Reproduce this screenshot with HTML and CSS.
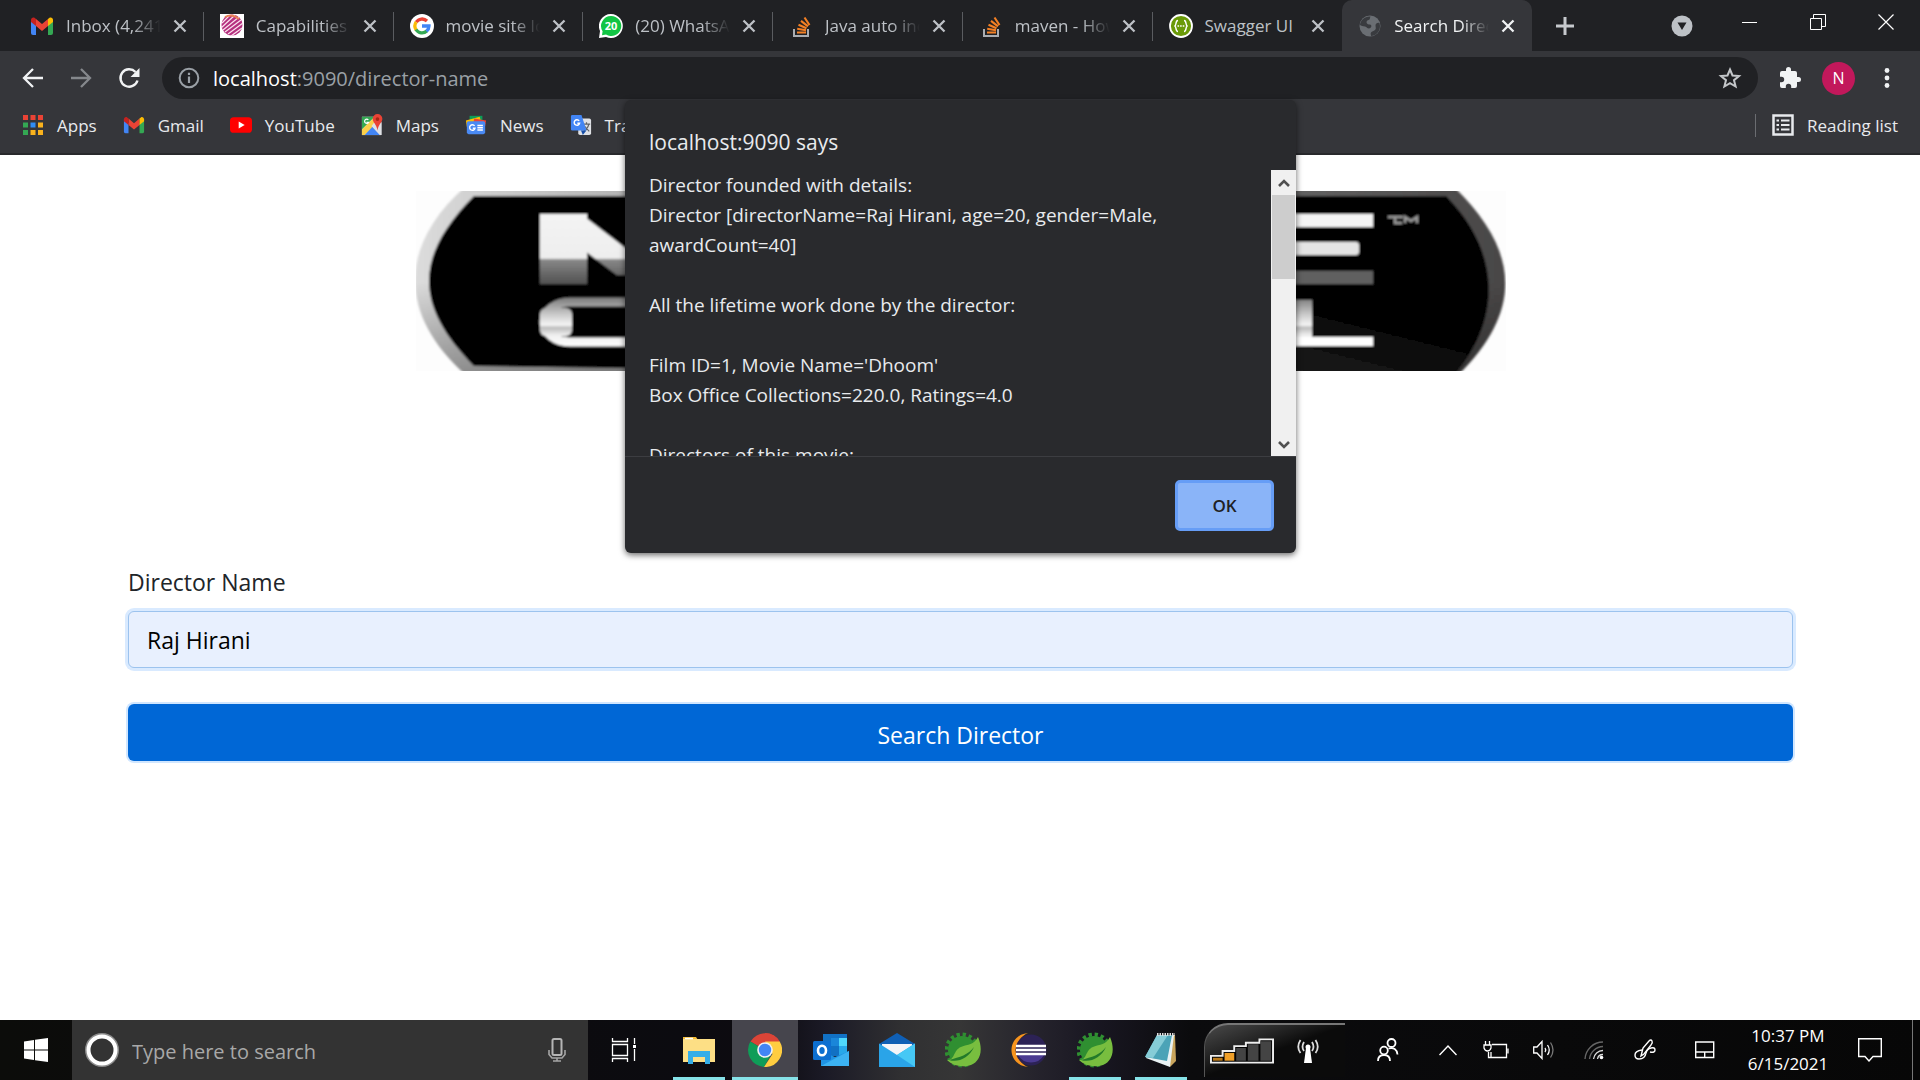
FILE: index.html
```html
<!DOCTYPE html>
<html lang="en">
<head>
<meta charset="utf-8">
<title>Search Director</title>
<link rel="stylesheet" href="styles.css">
</head>
<body>
<svg class="defs" aria-hidden="true">
  <defs>
    <symbol id="x" viewBox="0 0 14 14"><path d="M1.500 1.500l11 11M12.500 1.500l-11 11" fill="none" stroke="currentColor" stroke-width="2.300"/></symbol>
    <symbol id="gmail" viewBox="0 0 24 24"><path d="M1 6v13a2 2 0 0 0 2 2h3V10z" fill="#4285f4"/><path d="M23 6v13a2 2 0 0 1-2 2h-3V10z" fill="#34a853"/><path d="M6 5v7l6 5 6-5V5l-6 5z" fill="#ea4335"/><path d="M1 6v2l5 4V5L4.500 3.800C3 2.700 1 4 1 6z" fill="#c5221f"/><path d="M23 6v2l-5 4V5l1.500-1.200C21 2.700 23 4 23 6z" fill="#fbbc04"/></symbol>
    <symbol id="stack" viewBox="0 0 24 24"><path d="M5 15v7h14v-7" fill="none" stroke="#a9adb2" stroke-width="2"/><path d="M8 18.500h9M8.200 14.800l8.800 1.400M9.500 10.800l8 3.500M12 6.800l7 5.500M15.500 3.500l5 7.500" stroke="#f48024" stroke-width="2.100"/></symbol>
    <symbol id="spring" viewBox="0 0 36 36"><circle cx="17" cy="18" r="14" fill="#2f8f31"/><circle cx="17" cy="18" r="15.500" fill="none" stroke="#2f8f31" stroke-width="4" stroke-dasharray="3.300 2.800"/><path d="M33 5c6 14 2 27-11 29-8 1-15-1-20-6 8 1 6-10 14-13 7-3 13-2 17-10z" fill="#78be3f"/><path d="M4 28c9 3 20-2 25-13-6 8-14 10-25 13z" fill="#237a2a"/></symbol>
  </defs>
</svg>

<div class="screen">
  <header class="browser">
    <div class="tabbar">
      <div class="tabs">
        <div class="tab"><svg class="fav"><use href="#gmail"/></svg><span class="tab-title">Inbox (4,241)</span><button class="close" aria-label="Close tab"><svg><use href="#x"/></svg></button></div>
        <div class="tab"><svg class="fav" viewBox="0 0 24 24"><path d="M0 0h24v24H0z" fill="#fff"/><circle cx="12" cy="11" r="10.500" fill="#b5307f"/><path d="M2 9l9-9M1 14L15 1M3 16L19 3M5 18L21 6M8 20L23 9M11 22l11-8" stroke="#fbe3ee" stroke-width="1.200"/><path d="M5 3q7-4 14 2" stroke="#e98253" fill="none" stroke-width="2"/></svg><span class="tab-title">Capabilities -</span><button class="close" aria-label="Close tab"><svg><use href="#x"/></svg></button></div>
        <div class="tab"><svg class="fav" viewBox="0 0 24 24"><circle cx="12" cy="12" r="12" fill="#fff"/><g fill="none" stroke-width="3.300"><path d="M6.200 8.200A7 7 0 0 1 17 7" stroke="#ea4335"/><path d="M6.200 8A7 7 0 0 0 6.200 16" stroke="#fbbc05"/><path d="M6 15.500A7 7 0 0 0 16.800 17" stroke="#34a853"/><path d="M12 12h7A7 7 0 0 1 16.500 17.300" stroke="#4285f4"/></g></svg><span class="tab-title">movie site logo</span><button class="close" aria-label="Close tab"><svg><use href="#x"/></svg></button></div>
        <div class="tab"><svg class="fav" viewBox="0 0 24 24"><path d="M12 0a12 12 0 1 1-5 23L0 24l1-7A12 12 0 0 1 12 0z" fill="#fff"/><path d="M12 2a10 10 0 1 1-5 18.500l-4 .8.600-4A10 10 0 0 1 12 2z" fill="#12c544"/><text x="12" y="16" text-anchor="middle" class="badge-num">20</text></svg><span class="tab-title">(20) WhatsApp</span><button class="close" aria-label="Close tab"><svg><use href="#x"/></svg></button></div>
        <div class="tab"><svg class="fav"><use href="#stack"/></svg><span class="tab-title">Java auto incr</span><button class="close" aria-label="Close tab"><svg><use href="#x"/></svg></button></div>
        <div class="tab"><svg class="fav"><use href="#stack"/></svg><span class="tab-title">maven - How</span><button class="close" aria-label="Close tab"><svg><use href="#x"/></svg></button></div>
        <div class="tab"><svg class="fav" viewBox="0 0 24 24"><circle cx="12" cy="12" r="11" fill="#6a9a08" stroke="#fff" stroke-width="1.800"/><path d="M9 6.500c-3 0-1 5-3.500 5.500C8 12.500 6 17.500 9 17.500M15 6.500c3 0 1 5 3.500 5.500-2.500.500-.5 5.500-3.500 5.500" fill="none" stroke="#fff" stroke-width="1.500"/><path d="M8.500 12h7" stroke="#fff" stroke-width="1.600" stroke-dasharray="1.600 1"/></svg><span class="tab-title">Swagger UI</span><button class="close" aria-label="Close tab"><svg><use href="#x"/></svg></button></div>
        <div class="tab active"><svg class="fav" viewBox="0 0 24 24"><circle cx="12" cy="12" r="10.500" fill="#6a6e73"/><path d="M12.500 2.500c-1 2 0 3-2 3.500S8 8 9 9.500s3 .5 4 1.500 0 3-2 3.500c-2 0-2-1.500-4-2S3 12 2 11C2.500 6 7 2 12.500 2.500zM21.500 9c-2-.5-4 .5-4 2.500s1 3-.5 4.500-3 1-4 2.500.500 3 0 3.500c5 0 9-4.500 9-10z" fill="#393b3f"/></svg><span class="tab-title">Search Director</span><button class="close" aria-label="Close tab"><svg><use href="#x"/></svg></button></div>
      </div>
      <button class="new-tab" aria-label="New tab"><svg width="18" height="18" viewBox="0 0 18 18"><path d="M9 0v18M0 9h18" stroke="#c6c9cd" stroke-width="3"/></svg></button>
      <div class="window-controls">
        <button aria-label="Search tabs"><svg width="22" height="22" viewBox="0 0 22 22"><circle cx="11" cy="11" r="10.500" fill="#bdc1c6"/><path d="M6.500 7.500h9L11 15z" fill="#202124"/></svg></button>
        <button aria-label="Minimize"><svg width="16" height="16" viewBox="0 0 16 16"><path d="M0 8.500h15" stroke="#fff"/></svg></button>
        <button aria-label="Restore"><svg width="16" height="16" viewBox="0 0 16 16"><path d="M.500 4.500h11v11H.500zM3.500 4V.500h12v12H12" fill="none" stroke="#fff"/></svg></button>
        <button aria-label="Close"><svg width="16" height="16" viewBox="0 0 16 16"><path d="M.500.500l15 15M15.500.500l-15 15" stroke="#fff" stroke-width="1.200"/></svg></button>
      </div>
    </div>

    <div class="toolbar">
      <button aria-label="Back"><svg width="24" height="24" viewBox="0 0 24 24"><path d="M22 12H3M12 3l-9 9 9 9" fill="none" stroke="#f1f3f4" stroke-width="2.300"/></svg></button>
      <button aria-label="Forward"><svg width="24" height="24" viewBox="0 0 24 24"><path d="M2 12h19M12 3l9 9-9 9" fill="none" stroke="#85888c" stroke-width="2.300"/></svg></button>
      <button aria-label="Reload"><svg width="24" height="24" viewBox="0 0 24 24"><path d="M20.500 14.500A8.700 8.700 0 1 1 18.500 6" fill="none" stroke="#f1f3f4" stroke-width="2.400"/><path d="M22.500 2v9h-9z" fill="#f1f3f4"/></svg></button>
      <div class="omnibox">
        <svg width="22" height="22" viewBox="0 0 22 22"><circle cx="11" cy="11" r="9.300" fill="none" stroke="#9aa0a6" stroke-width="2"/><path d="M11 9.500V16M11 5.800v2.200" stroke="#9aa0a6" stroke-width="2.200"/></svg>
        <div class="url"><span class="host">localhost</span>:9090/director-name</div>
        <button aria-label="Bookmark this page"><svg width="24" height="24" viewBox="0 0 24 24"><path d="M12 3.500l2.500 6 6.500.500-5 4.200 1.600 6.300L12 17.100l-5.600 3.400L8 14.200 3 10l6.500-.500z" fill="none" stroke="#c4c7ca" stroke-width="2"/></svg></button>
      </div>
      <button aria-label="Extensions"><svg width="24" height="24" viewBox="0 0 24 24"><path d="M20.500 11H19V7a2 2 0 0 0-2-2h-4V3.500a2.500 2.500 0 0 0-5 0V5H4a2 2 0 0 0-2 2v3.800h1.500a2.700 2.700 0 0 1 0 5.400H2V20a2 2 0 0 0 2 2h3.800v-1.500a2.700 2.700 0 0 1 5.400 0V22H17a2 2 0 0 0 2-2v-4h1.500a2.500 2.500 0 0 0 0-5z" fill="#f1f3f4"/></svg></button>
      <button class="avatar">N</button>
      <button aria-label="Menu"><svg width="24" height="24" viewBox="0 0 24 24"><g fill="#f1f3f4"><circle cx="12" cy="4.500" r="2.400"/><circle cx="12" cy="12" r="2.400"/><circle cx="12" cy="19.500" r="2.400"/></g></svg></button>
    </div>

    <nav class="bookmarks">
      <a href="#"><svg viewBox="0 0 22 22"><path d="M1 1h5v5H1zM8.500 1h5v5h-5zM16 1h5v5h-5z" fill="#ea4335"/><path d="M1 8.500h5v5H1zM1 16h5v5H1z" fill="#34a853"/><path d="M8.500 8.500h5v5h-5z" fill="#2f8df5"/><path d="M16 8.500h5v5h-5zM8.500 16h5v5h-5zM16 16h5v5h-5z" fill="#f9b21d"/></svg>Apps</a>
      <a href="#"><svg><use href="#gmail"/></svg>Gmail</a>
      <a href="#"><svg viewBox="0 0 24 24"><rect y="3.500" width="24" height="17" rx="4" fill="#f00"/><path d="M9.500 8.200v7.600l6.500-3.800z" fill="#fff"/></svg>YouTube</a>
      <a href="#"><svg viewBox="0 0 24 24"><path d="M1 3h21v20H1z" fill="#e8eaed"/><path d="M1 3h14L1 17z" fill="#34a853"/><path d="M1 17L15 3l3 6L4 23H1z" fill="#fbd04a"/><path d="M4 23l8.500-9 8.500 9z" fill="#4285f4"/><path d="M11.500 13l9 10h2V9l-7-1z" fill="#dfe1e5"/><path d="M18 0a5.300 5.300 0 0 1 5.300 5.300C23.300 9.500 19 11 18 18c-1-7-5.300-8.500-5.300-12.700A5.300 5.300 0 0 1 18 0z" fill="#ea4335"/><circle cx="18" cy="5.500" r="2" fill="#a52714"/><path d="M8 6.500A2.300 2.300 0 1 0 8.300 9H6" stroke="#fff" stroke-width="1.300" fill="none"/></svg>Maps</a>
      <a href="#"><svg viewBox="0 0 24 24"><path d="M5 2h14v9H5z" fill="#0c9d58"/><path d="M1 7l15-4 2 7-16 4z" fill="#fbbc04"/><path d="M10 5l13 2-1 6-13-2z" fill="#ea4335"/><rect x="2" y="8" width="20" height="14" rx="2" fill="#4a8af4"/><path d="M10.500 13A3 3 0 1 0 11 15.500H8.500M13.500 12.500h6M13.500 15h6M13.500 17.500h6" fill="none" stroke="#fff" stroke-width="1.500"/></svg>News</a>
      <a href="#"><svg viewBox="0 0 24 24"><rect x="9" y="5" width="14" height="18" rx="2" fill="#dfe1e5"/><path d="M14 11h8M18 9v2M20.500 11q-1 5-5.500 7M15.500 13l5.500 6" stroke="#5f6368" stroke-width="1.300" fill="none"/><path d="M2.500 1h10L18 18H2.500A1.500 1.500 0 0 1 1 16.500v-14A1.500 1.500 0 0 1 2.500 1z" fill="#4285f4"/><path d="M12 18h6l-4 5z" fill="#174ea6"/><path d="M10 7.500A3 3 0 1 0 10.500 10H8" stroke="#fff" stroke-width="1.600" fill="none"/></svg>Translate</a>
      <button class="reading"><svg viewBox="0 0 22 22"><path d="M1.500 1.500h19v19h-19z" fill="none" stroke="#e8eaed" stroke-width="2.500"/><path d="M4.500 6.500H7M4.500 11H7M4.500 15.500H7M9 6.500h8.500M9 11h8.500M9 15.500h8.500" stroke="#e8eaed" stroke-width="2.200"/></svg>Reading list</button>
    </nav>
  </header>

  <main class="page">
    <svg class="logo" viewBox="0 0 1090 180" preserveAspectRatio="none" aria-hidden="true">
      <defs>
        <linearGradient id="rim"><stop offset="0" stop-color="#dcdcdc"/><stop offset=".25" stop-color="#a8a8a8"/><stop offset=".75" stop-color="#6a6a6a"/><stop offset="1" stop-color="#484646"/></linearGradient>
        <linearGradient id="rimfade" x1="0" x2="0" y1="0" y2="1"><stop offset=".5" stop-opacity="0"/><stop offset="1" stop-opacity=".35"/></linearGradient>
        <linearGradient id="face" gradientUnits="userSpaceOnUse" x1="800" x2="770" y1="80" y2="200"><stop offset="0" stop-color="#000"/><stop offset="1" stop-color="#2a2a2a"/></linearGradient>
        <linearGradient id="chrome" gradientUnits="userSpaceOnUse" x1="0" x2="0" y1="20" y2="95"><stop offset="0" stop-color="#f4f4f4"/><stop offset=".63" stop-color="#eee"/><stop offset=".65" stop-color="#888"/><stop offset="1" stop-color="#4c4c4c"/></linearGradient>
        <linearGradient id="chrome2" gradientUnits="userSpaceOnUse" x1="0" x2="0" y1="106" y2="157"><stop offset="0" stop-color="#777"/><stop offset=".35" stop-color="#ccc"/><stop offset=".55" stop-color="#f5f5f5"/><stop offset=".6" stop-color="#bbb"/><stop offset=".75" stop-color="#f0f0f0"/><stop offset="1" stop-color="#fff"/></linearGradient>
        <filter id="soft"><feGaussianBlur stdDeviation="1.200"/></filter>
        <clipPath id="upper"><rect x="120" y="23" width="180" height="61"/></clipPath>
      </defs>
      <rect width="1090" height="180" fill="#fdfdfd"/>
      <g filter="url(#soft)">
        <path d="M49 -4C-18 55-18 125 52 186H1040C1106 122 1106 62 1038 -4z" fill="url(#rim)"/>
        <path d="M49 -4C-18 55-18 125 52 186H1040C1106 122 1106 62 1038 -4z" fill="url(#rimfade)"/>
        <path d="M58 5C-2 65-2 115 58 175L900 186H1036C1086 130 1086 62 1030 5z" fill="#000"/>
        <path d="M520 5H1030C1086 62 1084 130 1034 186H520z" fill="url(#face)"/>
        <rect x="124" y="23" width="47" height="70" fill="url(#chrome)"/>
        <g clip-path="url(#upper)"><path d="M165 23L250 88H206L169 60V23z" fill="url(#chrome)"/></g>
        <rect x="128" y="111" width="160" height="40" rx="26" fill="none" stroke="url(#chrome2)" stroke-width="9"/>
        <rect x="124" y="117" width="32" height="28" rx="6" fill="url(#chrome2)"/>
        <rect x="800" y="23" width="157" height="13" fill="#f4f4f4"/>
        <rect x="800" y="51" width="143" height="13" rx="3" fill="#e4e4e4"/>
        <rect x="800" y="80" width="157" height="13" fill="#606060"/>
        <rect x="850" y="109" width="46" height="42" fill="url(#chrome2)"/>
        <rect x="850" y="146" width="107" height="9" fill="#fff"/>
        <path d="M972 26h15M979 27v5h7M989 32v-6l6 4 6-4v6" fill="none" stroke="#999" stroke-width="2.500"/>
      </g>
    </svg>
    <form class="search-form" onsubmit="return false">
      <label for="director">Director Name</label>
      <input id="director" type="text" value="Raj Hirani">
      <button type="submit">Search Director</button>
    </form>
  </main>

  <footer class="taskbar">
    <button class="start" aria-label="Start"><svg width="24" height="24" viewBox="0 0 24 24"><path d="M0 3.400L10 2v9.500H0zM11 1.800L24 0v11.500H11zM0 12.500h10V22L0 20.600zM11 12.500h13V24l-13-1.800z" fill="#fff"/></svg></button>
    <div class="search">
      <svg width="36" height="36" viewBox="0 0 36 36"><circle cx="18" cy="18" r="15.500" fill="none" stroke="#8d8d8d" stroke-width="3"/><circle cx="18" cy="18" r="13.500" fill="none" stroke="#fff" stroke-width="4"/></svg>
      <input type="text" placeholder="Type here to search" aria-label="Type here to search">
      <svg width="18" height="24" viewBox="0 0 18 24"><rect x="4.500" y="1" width="9" height="16" rx="1.500" fill="none" stroke="#b5b5b5" stroke-width="2"/><path d="M1 12v4.500L4 20h10l3-3.500V12M9 20v3M5 23h8" fill="none" stroke="#a5a5a5" stroke-width="1.600"/></svg>
    </div>
    <button class="app wide" aria-label="Task View"><svg width="26" height="24" viewBox="0 0 26 24"><path d="M1.500 0v3.500h15V0M1.500 24v-3.500h15V24M1.500 6.500h15v11h-15zM23.500 0v6M23.500 11v12" fill="none" stroke="#fff" stroke-width="1.300"/><path d="M22 7h3v3h-3z" fill="#fff"/></svg></button>
    <button class="app open" aria-label="File Explorer"><svg width="32" height="28" viewBox="0 0 32 28"><path d="M0 1h13l2 3H0z" fill="#f5bd35"/><path d="M0 3h32v23H0z" fill="#fddf85"/><path d="M2 2.500h8" stroke="#fff" stroke-width="1.500"/><path d="M5 28V15h22v13h-5v-7H10v7z" fill="#35aee8"/></svg></button>
    <button class="app current" aria-label="Chrome"><svg width="34" height="34" viewBox="0 0 34 34"><path d="M17 17L2.500 8.500A17 17 0 0 1 31.700 8.500z" fill="#db4437"/><path d="M17 0A17 17 0 0 1 31.700 8.500H17z" fill="#db4437"/><path d="M2.300 8.500A17 17 0 0 0 16 34l7.500-13.500L17 17z" fill="#0f9d58"/><path d="M31.700 8.500H17l7.500 12.500L16 34A17 17 0 0 0 31.700 8.500z" fill="#ffcd40"/><circle cx="17" cy="17" r="7.800" fill="#f1f1f1"/><circle cx="17" cy="17" r="6.200" fill="#4285f4"/></svg></button>
    <button class="app" aria-label="Outlook"><svg width="36" height="34" viewBox="0 0 36 34"><path d="M10 1h24v22H10z" fill="#1171c4"/><path d="M18 5h8v8h-8z" fill="#1a86d9"/><path d="M26 5h8v8h-8z" fill="#4fd8fb"/><path d="M26 13h8v9h-8z" fill="#28a8ea"/><path d="M8 18l14 6 14-6v15H8z" fill="#1f93e3"/><path d="M8 33h28V18z" fill="#3cb2f2"/><rect y="8" width="18" height="19" rx="1.500" fill="#0d6fd0"/><ellipse cx="9" cy="17.500" rx="4" ry="4.800" fill="none" stroke="#fff" stroke-width="2.600"/></svg></button>
    <button class="app" aria-label="Mail"><svg width="36" height="34" viewBox="0 0 36 34"><path d="M0 11L18 0l18 11v5H0z" fill="#0f5fb5"/><path d="M3 11h30v12H3z" fill="#f3f4f8"/><path d="M0 10.500L18 22 36 10.500V34H0z" fill="#2aa4e8"/><path d="M36 10.500L18 22l18 12z" fill="#46c8f5"/></svg></button>
    <button class="app" aria-label="Spring Tools"><svg width="36" height="36"><use href="#spring"/></svg></button>
    <button class="app" aria-label="Eclipse"><svg width="36" height="34" viewBox="0 0 36 34"><path d="M17 0C-5 2-5 32 17 34 2 28 2 6 17 0z" fill="#f7941e"/><circle cx="20" cy="17" r="15.500" fill="#2c2255"/><path d="M7 22a15 15 0 0 0 26 0z" fill="#4a3a91"/><path d="M5 13h30M5 17h30M5 21h30" stroke="#fff" stroke-width="2.300"/></svg></button>
    <button class="app open" aria-label="Spring Tool Suite"><svg width="36" height="36"><use href="#spring"/></svg></button>
    <button class="app open" aria-label="Notepad"><svg width="34" height="36" viewBox="0 0 34 36"><path d="M14 3h17l1 26-6 6z" fill="#c8a45c"/><path d="M14 3h16l-4 32L2 26z" fill="#e9f2f4"/><path d="M13 3h15l-5 26L1 25z" fill="#4ba3b7"/><path d="M13 3h11L9 26l-8-1z" fill="#86ccd7"/><path d="M13 2.500h18" stroke="#ddd" stroke-width="3" stroke-dasharray="1.500 1"/></svg></button>
    <div class="signal">
      <svg width="64" height="26" viewBox="0 0 66 26"><path d="M1 25v-7h12v-5h12V8h12V4.500h14V1h14v24z" fill="#050505" stroke="#eee" stroke-width="2"/><path d="M3 20h10v3H3z" fill="#b97a1b"/><path d="M15 15h10v8H15z" fill="#f0a029"/><path d="M27 10h10v13H27zM39 6h11v17H39zM52 3h11v20H52z" fill="#444"/></svg>
      <svg width="24" height="24" viewBox="0 0 24 24"><path d="M10 9h4l2 15H8z" fill="#fff"/><circle cx="12" cy="8" r="2.500" fill="#fff"/><path d="M8 3q-3 5 0 9M4.500 1q-4.500 7 0 13M16 3q3 5 0 9M19.500 1q4.500 7 0 13" fill="none" stroke="#ddd" stroke-width="1.800"/></svg>
    </div>
    <div class="tray">
      <button class="people" aria-label="People"><svg width="24" height="24" viewBox="0 0 24 24"><g fill="none" stroke="#fff" stroke-width="1.800"><circle cx="15.500" cy="5" r="4"/><circle cx="8" cy="12.500" r="3.800"/><path d="M2 23q0-6 6-6t6 6M12.500 10.500q8-2 9 6"/></g></svg></button>
      <button aria-label="Show hidden icons"><svg width="18" height="12" viewBox="0 0 18 12"><path d="M.500 11L9 2l8.500 9" fill="none" stroke="#fff" stroke-width="1.400"/></svg></button>
      <button aria-label="Battery"><svg width="26" height="20" viewBox="0 0 26 20"><path d="M9 4.500h14.500v13H5.500V12M25 8.500v5M2.500 1v4M6.500 1v4M1 5h7v3q-1 3-3.500 3T1 8zM8 12v5" fill="none" stroke="#fff" stroke-width="1.300"/></svg></button>
      <button aria-label="Volume"><svg width="22" height="20" viewBox="0 0 22 20"><path d="M.700 7v6H4l5 5.500v-17L4 7z" fill="none" stroke="#fff" stroke-width="1.300"/><path d="M12 8q1.500 2 0 4M14.500 5q3.500 5 0 10" fill="none" stroke="#fff" stroke-width="1.300"/><path d="M17.500 2.500q5 7.500 0 15" fill="none" stroke="#777" stroke-width="1.300"/></svg></button>
      <button class="wifi" aria-label="Wi-Fi"><svg width="20" height="20" viewBox="0 0 20 20"><path d="M1 19A18 18 0 0 1 19 2M5.500 19A14 14 0 0 1 19 6.500" fill="none" stroke="#666" stroke-width="1.400"/><path d="M9.500 19A9.500 9.500 0 0 1 19 10.500M13.500 19a5.500 5.500 0 0 1 5.500-4.500" fill="none" stroke="#ddd" stroke-width="1.300"/><circle cx="17.500" cy="17.500" r="1.800" fill="#fff"/></svg></button>
      <button class="pen" aria-label="Windows Ink"><svg width="22" height="22" viewBox="0 0 22 22"><path d="M7 17L9 9l6-7q2-2 3 0t-1 4L10 15z" fill="none" stroke="#fff" stroke-width="1.400"/><path d="M8 11q-7 1-7 5t4 4q6 0 7-6 1-4 5-5t4 2-5 2" fill="none" stroke="#fff" stroke-width="1.400"/></svg></button>
      <button class="pad" aria-label="Touchpad"><svg width="20" height="18" viewBox="0 0 20 18"><path d="M.700 1h18v15.500H.700zM1 11h18M9.700 11v5" fill="none" stroke="#fff" stroke-width="1.400"/></svg></button>
      <div class="clock"><span>10:37 PM</span><span>6/15/2021</span></div>
      <button class="notes" aria-label="Notifications"><svg width="24" height="24" viewBox="0 0 24 24"><path d="M.700.700h22.600V18.500H15L11 23l-4-4.500H.700z" fill="none" stroke="#fff" stroke-width="1.400"/></svg></button>
      <button class="desktop" aria-label="Show desktop"></button>
    </div>
  </footer>

  <div class="dialog" role="alertdialog" aria-labelledby="says">
    <h1 id="says">localhost:9090 says</h1>
    <div class="message">
      <p>Director founded with details:
Director [directorName=Raj Hirani, age=20, gender=Male,
awardCount=40]

All the lifetime work done by the director:

Film ID=1, Movie Name='Dhoom'
Box Office Collections=220.0, Ratings=4.0

Directors of this movie:</p>
      <div class="scrollbar">
        <svg width="12" height="8" viewBox="0 0 12 8"><path d="M1 7l5-5 5 5" fill="none" stroke="#505050" stroke-width="2.600"/></svg>
        <div class="thumb"></div>
        <svg width="12" height="8" viewBox="0 0 12 8"><path d="M1 1l5 5 5-5" fill="none" stroke="#505050" stroke-width="2.600"/></svg>
      </div>
    </div>
    <div class="actions"><button>OK</button></div>
  </div>
</div>
</body>
</html>
```
FILE: styles.css
```css
* { box-sizing: border-box; }
body { margin: 0; font-family: "Open Sans", "Noto Sans", sans-serif; }
button, input { font: inherit; color: inherit; }
button { display: flex; align-items: center; justify-content: center; padding: 0; border: 0; background: none; }
svg { display: block; flex: none; }
.defs { position: absolute; width: 0; height: 0; }
.screen { position: relative; display: flex; flex-direction: column; min-height: 100vh; background: #fff; }

.browser { background: #35363a; border-bottom: 2px solid #28292c; color: #e8eaed; }
.tabbar { display: flex; height: 51px; background: #202124; }
.tabs { display: grid; grid-template-columns: repeat(8, 1fr); flex: 0 1 1532px; padding-left: 14px; }
.tab { position: relative; display: flex; align-items: center; gap: 12px; padding: 0 17px 0 16px; min-width: 0; font-size: 17px; color: #bdc1c6; }
.tab::after { content: ""; position: absolute; right: 0; top: 12px; height: 29px; width: 1px; background: #5a5c60; }
.tab.active { background: #35363a; border-radius: 10px 10px 0 0; color: #f1f3f4; }
.tab.active::after, .tab:nth-child(7)::after { display: none; }
.fav { width: 24px; height: 24px; }
.badge-num { font: bold 11px "Open Sans", sans-serif; fill: #fff; }
.tab-title { flex: 1; min-width: 0; overflow: hidden; white-space: nowrap; -webkit-mask-image: linear-gradient(90deg, #000 70%, transparent); mask-image: linear-gradient(90deg, #000 70%, transparent); }
.tab:nth-child(7) .tab-title { -webkit-mask-image: none; mask-image: none; }
.close svg { width: 14px; height: 14px; }
.new-tab { width: 66px; }
.window-controls { display: flex; margin-left: auto; padding-bottom: 8px; }
.window-controls button { width: 68px; }
.window-controls button:first-child { padding-top: 8px; }

.toolbar { display: flex; align-items: center; height: 54px; padding: 0 9px; }
.toolbar > button { width: 48px; height: 42px; }
.omnibox { display: flex; flex: 1; align-items: center; height: 42px; margin: 0 8px 0 9px; padding: 0 16px; border-radius: 21px; background: #202124; }
.url { flex: 1; padding-left: 13px; font-size: 20px; color: #9aa0a6; white-space: nowrap; }
.host { color: #fff; }
.toolbar > .avatar { width: 33px; height: 33px; margin: 0 8px; border-radius: 50%; background: #c2185b; color: #fff; font-size: 16px; }

.bookmarks { display: flex; align-items: center; gap: 26px; height: 48px; padding: 0 22px 8px; font-size: 17px; }
.bookmarks a { display: flex; align-items: center; gap: 13px; color: inherit; text-decoration: none; }
.bookmarks svg { width: 22px; height: 22px; }
.reading { gap: 13px; margin-left: auto; padding-left: 16px; border-left: 1px solid #6b6d71; }

.page { flex: 1; padding: 36px 127px 0 128px; }
.logo { width: 1090px; max-width: 100%; height: 180px; margin: 0 auto; }
.search-form { display: flex; flex-direction: column; margin-top: 192px; font-size: 23px; color: #212529; }
.search-form label { line-height: 38px; margin-bottom: 10px; }
.search-form input { height: 57px; padding: 4px 18px; border: 1px solid #9cc3ee; border-radius: 6px; background: #e8f0fe; box-shadow: 0 0 0 3px #d9eaff; color: #000; outline: 0; }
.search-form button { height: 57px; margin-top: 36px; padding-top: 4px; border-radius: 6px; background: #0067d6; box-shadow: 0 0 0 2px #d0e6ff; color: #fff; }

.taskbar { display: flex; height: 60px; background: linear-gradient(90deg, #0c0c0a 0, #0c0b10 36%, #0d0b10 40%, #1b1a26 43%, #303032 47%, #363636 50%, #25232c 54%, #191722 57%, #0b0b0d 62%, #070707 100%); color: #fff; }
.start { width: 72px; }
.search { display: flex; align-items: center; width: 516px; padding: 0 22px 0 12px; background: #333; }
.search input { flex: 1; min-width: 0; padding: 3px 12px 0; border: 0; background: none; font-size: 20px; }
.search input::placeholder { color: #a8a8a8; opacity: 1; }
.app { position: relative; width: 66px; }
.app.wide { width: 72px; margin-right: 6px; }
.app.open::after, .app.current::after { content: ""; position: absolute; left: 7px; right: 7px; bottom: 0; height: 3px; background: #86e2e8; }
.app.current { background: #46454d; }
.app.current::after { left: 0; right: 0; }
.signal { display: flex; align-items: center; gap: 22px; width: 141px; height: 54px; margin: 3px 0 0 10px; padding-left: 5px; border-top: 2px solid #777; border-left: 1px solid #555; border-radius: 24px 0 0 0; background: linear-gradient(160deg, #4a4a4a 0, #262626 30%, #0b0b0b 50%); }
.tray { display: flex; margin-left: auto; }
.tray button { width: 48px; }
.tray .people { width: 72px; }
.tray .wifi { width: 52px; }
.tray .pen { width: 50px; }
.tray .pad { width: 78px; padding-right: 8px; }
.clock { display: flex; flex-direction: column; align-items: center; justify-content: center; width: 80px; font-size: 17px; line-height: 28px; }
.tray .notes { width: 84px; }
.tray .desktop { width: 8px; border-left: 1px solid #777; }

.dialog { position: absolute; top: 100px; left: 50%; width: 671px; margin-left: -335px; border-radius: 6px; background: #292a2d; color: #e8eaed; box-shadow: 0 2px 6px #0009; }
.dialog h1 { margin: 0; padding: 24px 24px 10px; font-size: 21px; font-weight: 400; line-height: 36px; }
.message { display: flex; height: 286px; overflow: hidden; }
.message p { flex: 1; margin: 0; padding-left: 24px; font-size: 19px; line-height: 30px; white-space: pre; }
.scrollbar { display: flex; flex-direction: column; align-items: center; width: 25px; padding: 9px 1px 7px; background: #f0f0f0; }
.thumb { width: 100%; height: 84px; margin: 8px 0 auto; background: #cdcdcd; }
.actions { display: flex; justify-content: flex-end; padding: 23px 22px 22px; border-top: 1px solid #3c3d41; }
.actions button { width: 99px; height: 51px; border: 3px solid #669df6; border-radius: 5px; background: #8ab4f8; color: #202124; font-size: 17px; font-weight: 600; }
```
